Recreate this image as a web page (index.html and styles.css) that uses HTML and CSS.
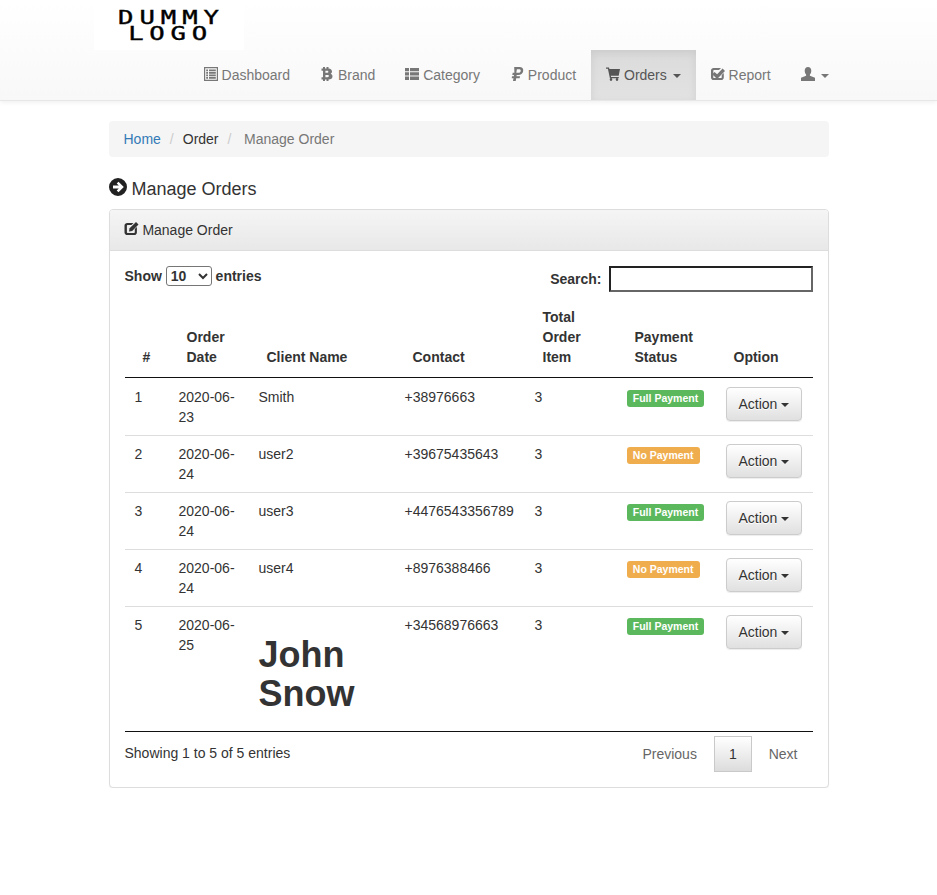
FILE: index.html
```html
<!DOCTYPE html>
<html lang="en">
<head>
<meta charset="utf-8">
<title>Manage Orders</title>
<link rel="stylesheet" href="styles.css">
</head>
<body>
<svg class="defs" width="0" height="0" aria-hidden="true">
  <symbol id="i-list" viewBox="0 0 14 14"><path fill-rule="evenodd" d="M0 0h14v14H0zM1.200 1.200v11.600h11.600V1.200zM2.200 2.400h1.800v1.800H2.200zM5 2.400h6.800v1.800H5zM2.200 5h1.800v1.800H2.200zM5 5h6.800v1.800H5zM2.200 7.500h1.800v1.800H2.200zM5 7.500h6.800v1.800H5zM2.200 10h1.800v1.800H2.200zM5 10h6.800v1.800H5z"/></symbol>
  <symbol id="i-btc" viewBox="0 0 14 14"><path fill-rule="evenodd" d="M3 0h2v1.500h1.500V0h2v1.600C10.800 1.900 12 3 12 4.600c0 1-.5 1.800-1.300 2.200 1.100.4 1.800 1.300 1.800 2.600 0 1.800-1.500 2.900-4 3V14h-2v-1.600H5V14H3v-1.600H1.500v-2.200H3V3.700H1.500V1.500H3zM5.400 3.700v2.100h1.700c.8 0 1.300-.4 1.300-1s-.5-1.100-1.300-1.100zM5.400 7.900v2.300h2c1 0 1.500-.4 1.500-1.200S8.400 7.900 7.400 7.900z"/></symbol>
  <symbol id="i-th" viewBox="0 0 14 14"><path d="M0 1h4v3.300H0zM5 1h9v3.300H5zM0 5.300h4v3.300H0zM5 5.300h9v3.300H5zM0 9.600h4V13H0zM5 9.600h9V13H5z"/></symbol>
  <symbol id="i-rub" viewBox="0 0 14 14"><path fill-rule="evenodd" d="M4.200 0h5.300C12 0 13.600 1.500 13.200 3.900S10.800 8 8.300 8H6.700l-.2 1.300H10l-.3 1.900H6.200L5.700 14H3l.5-2.800H1.700L2 9.300h1.800L4 8H2.300l.4-2.300h1.700zM6.900 2.200l-.6 3.500h2.300c1.200 0 1.900-.7 2.100-1.800s-.4-1.700-1.500-1.700z"/></symbol>
  <symbol id="i-cart" viewBox="0 0 14 14"><path d="M0 .4h3l.4 1.600H14l-1.300 6.800H4.800l.3 1.200h7.700v1.300H3.900L1.900 1.700H0zM5 11.300a1.300 1.300 0 1 1 0 2.600 1.300 1.300 0 0 1 0-2.600zM11 11.300a1.300 1.300 0 1 1 0 2.600 1.300 1.300 0 0 1 0-2.600z"/></symbol>
  <symbol id="i-check" viewBox="0 0 14 14"><path d="M2.600 1H10L8 3H3c-.4 0-.7.300-.7.700v6.700c0 .4.300.7.700.7h7c.4 0 .7-.3.700-.7V8l2.100-2v4.400c0 1.500-1.100 2.600-2.600 2.600H2.600C1.100 13 0 11.900 0 10.400V3.600C0 2.100 1.100 1 2.600 1z"/><path d="M3.600 4.900l2.500 2.400L11.600 1.600 14 4 6.100 11.900 1.200 7.300z"/></symbol>
  <symbol id="i-user" viewBox="0 0 14 14"><path d="M7 0c2 0 3.300 1.500 3.300 3.700 0 1.500-.6 3-1.400 3.800v1.200l5.100 2.100V14H0v-3.200l5.100-2.100V7.500C4.300 6.700 3.700 5.200 3.700 3.700 3.700 1.500 5 0 7 0z"/></symbol>
  <symbol id="i-arrow" viewBox="0 0 18 18"><path fill-rule="evenodd" d="M9 0a9 9 0 1 1 0 18A9 9 0 0 1 9 0zM9.500 3.700L7.700 5.500l2.100 2H4v3h5.800l-2.100 2 1.800 1.800L14.800 9z"/></symbol>
  <symbol id="i-edit" viewBox="0 0 14 14"><path d="M2.800 1H9L7 3H3.100c-.4 0-.7.300-.7.700v6.500c0 .4.300.7.700.7h6.500c.4 0 .7-.3.700-.7V7l2.100-2.100v5.500c0 1.500-1.100 2.600-2.600 2.600H2.800C1.200 13 0 11.900 0 10.400V3.600C0 2.100 1.200 1 2.800 1z"/><path d="M11.500 0L14 2.500 7.700 8.900 4.500 9.500l.6-3.200z"/></symbol>
</svg>

<header class="navbar">
  <div class="container">
    <div class="brand"><span class="logo-text"><span class="logo-line">DUMMY</span><span class="logo-line logo-second">LOGO</span></span></div>
    <nav class="nav">
      <a class="nav-item"><svg class="icon"><use href="#i-list"/></svg> Dashboard</a>
      <a class="nav-item"><svg class="icon"><use href="#i-btc"/></svg> Brand</a>
      <a class="nav-item"><svg class="icon"><use href="#i-th"/></svg> Category</a>
      <a class="nav-item"><svg class="icon"><use href="#i-rub"/></svg> Product</a>
      <a class="nav-item active"><svg class="icon"><use href="#i-cart"/></svg> Orders <span class="caret"></span></a>
      <a class="nav-item"><svg class="icon"><use href="#i-check"/></svg> Report</a>
      <a class="nav-item"><svg class="icon"><use href="#i-user"/></svg> <span class="caret"></span></a>
    </nav>
  </div>
</header>

<main class="page">
  <ol class="breadcrumb">
    <li><a class="link">Home</a></li>
    <li>Order</li>
    <li class="current">Manage Order</li>
  </ol>

  <h4 class="page-title"><svg class="title-icon"><use href="#i-arrow"/></svg> Manage Orders</h4>

  <section class="panel">
    <div class="panel-heading"><svg class="icon heading-icon"><use href="#i-edit"/></svg> Manage Order</div>
    <div class="panel-body">
      <div class="controls">
        <label class="length">Show
          <select class="length-select"><option>10</option><option>25</option><option>50</option></select>
          entries</label>
        <label class="search">Search:<input class="search-input" type="search"></label>
      </div>

      <table class="orders">
        <colgroup>
          <col class="c-num"><col class="c-date"><col class="c-client"><col class="c-contact"><col class="c-total"><col class="c-pay"><col class="c-opt">
        </colgroup>
        <thead>
          <tr><th>#</th><th>Order Date</th><th>Client Name</th><th>Contact</th><th>Total Order Item</th><th>Payment Status</th><th>Option</th></tr>
        </thead>
        <tbody>
          <tr><td>1</td><td>2020-06-23</td><td>Smith</td><td>+38976663</td><td>3</td><td><span class="label label-ok">Full Payment</span></td><td><button class="btn">Action <span class="caret btn-caret"></span></button></td></tr>
          <tr><td>2</td><td>2020-06-24</td><td>user2</td><td>+39675435643</td><td>3</td><td><span class="label label-warn">No Payment</span></td><td><button class="btn">Action <span class="caret btn-caret"></span></button></td></tr>
          <tr><td>3</td><td>2020-06-24</td><td>user3</td><td>+4476543356789</td><td>3</td><td><span class="label label-ok">Full Payment</span></td><td><button class="btn">Action <span class="caret btn-caret"></span></button></td></tr>
          <tr><td>4</td><td>2020-06-24</td><td>user4</td><td>+8976388466</td><td>3</td><td><span class="label label-warn">No Payment</span></td><td><button class="btn">Action <span class="caret btn-caret"></span></button></td></tr>
          <tr><td>5</td><td>2020-06-25</td><td><h1 class="client-big">John Snow</h1></td><td>+34568976663</td><td>3</td><td><span class="label label-ok">Full Payment</span></td><td><button class="btn">Action <span class="caret btn-caret"></span></button></td></tr>
        </tbody>
      </table>

      <div class="table-foot">
        <div class="info">Showing 1 to 5 of 5 entries</div>
        <div class="pager">
          <a class="page-btn">Previous</a>
          <a class="page-btn current-page">1</a>
          <a class="page-btn">Next</a>
        </div>
      </div>
    </div>
  </section>
</main>
</body>
</html>
```
FILE: styles.css
```css
* { box-sizing: border-box; }
html, body { margin: 0; padding: 0; }
body {
  font-family: "Liberation Sans", Arial, sans-serif;
  font-size: 14px;
  line-height: 20px;
  color: #333;
  background: #fff;
}
.defs { position: absolute; }
.icon { width: 14px; height: 14px; fill: currentColor; vertical-align: -1px; }

.navbar {
  height: 101px;
  background: linear-gradient(to bottom, #fff 0%, #f8f8f8 100%);
  border-bottom: 1px solid #e7e7e7;
  box-shadow: inset 0 1px 0 rgba(255,255,255,.15), 0 1px 5px rgba(0,0,0,.075);
}
.container { width: 750px; margin: 0 auto; }
.brand {
  width: 150px;
  height: 50px;
  background: #fff;
  display: flex;
  justify-content: flex-start;
  padding: 9px 0 0 24px;
}
.logo-text {
  display: block;
  width: 78px;
  transform: scaleX(1.35);
  transform-origin: left top;
  font-family: "DejaVu Sans Mono", monospace;
  font-weight: 400;
  font-size: 19px;
  line-height: 16px;
  color: #000;
  white-space: nowrap;
  -webkit-text-stroke: 0.4px #000;
}
.logo-line { display: block; letter-spacing: 4.400px; }
.logo-second { margin-left: 7.500px; letter-spacing: 4.300px; }
.nav { display: flex; justify-content: flex-end; height: 50px; }
.nav-item { display: block; padding: 15px; color: #777; white-space: nowrap; }
.nav-item.active {
  color: #555;
  background: linear-gradient(to bottom, #dbdbdb 0%, #e2e2e2 100%);
  box-shadow: inset 0 3px 9px rgba(0,0,0,.075);
}
.caret {
  display: inline-block;
  width: 0; height: 0;
  margin-left: 2px;
  vertical-align: middle;
  border-top: 4px solid currentColor;
  border-left: 4px solid transparent;
  border-right: 4px solid transparent;
}
.btn-caret { margin-left: 0; }

.page { width: 720px; margin: 20px auto 0; }
.breadcrumb {
  list-style: none;
  display: flex;
  height: 36px;
  margin: 0 0 20px;
  padding: 8px 15px;
  background: #f5f5f5;
  border-radius: 4px;
}
.breadcrumb li + li::before { content: "/"; color: #ccc; padding: 0 9px 0 9px; }
.breadcrumb .current { color: #777; }
.breadcrumb .current::before { padding-right: 12.600px; }
.link { color: #337ab7; }

.page-title {
  margin: 0 0 10px;
  padding-top: 1px;
  font-size: 18px;
  font-weight: 400;
  line-height: 20px;
  color: #333;
  height: 22px;
}
.title-icon { width: 18px; height: 18px; fill: #222; vertical-align: -1px; }

.panel {
  border: 1px solid #ddd;
  border-radius: 4px;
  box-shadow: 0 1px 1px rgba(0,0,0,.05);
  background: #fff;
}
.panel-heading {
  height: 41px;
  padding: 10px 15px;
  background: linear-gradient(to bottom, #f5f5f5 0%, #e8e8e8 100%);
  border-bottom: 1px solid #ddd;
  border-radius: 3px 3px 0 0;
}
.heading-icon { margin-left: -1px; width: 15px; }
.panel-body { padding: 15px; }

.controls { display: flex; justify-content: space-between; height: 31px; font-weight: 700; }
.length-select {
  font-family: inherit;
  font-size: 14px;
  font-weight: 700;
  width: 46px;
  height: 20px;
  margin: 0;
  background: #fff;
  color: #333;
  border: 1px solid #767676;
  border-radius: 3px;
  padding: 0;
}
.search { display: flex; align-items: center; height: 26px; }
.search-input {
  width: 204px;
  height: 26px;
  margin-left: 7px;
  border-width: 2px;
  border-style: solid;
  border-color: #222 #666 #666 #222;
  border-radius: 0;
  outline: none;
  background: #fff;
}

.orders { width: 688px; table-layout: fixed; border-collapse: collapse; }
.c-num { width: 44px; }
.c-date { width: 80px; }
.c-client { width: 146px; }
.c-contact { width: 130px; }
.c-total { width: 92px; }
.c-pay { width: 99px; }
.c-opt { width: 97px; }
.orders th {
  padding: 10px 18px;
  text-align: left;
  vertical-align: bottom;
  font-weight: 700;
  border-bottom: 1px solid #111;
}
.orders td { padding: 8px 10px; vertical-align: top; border-top: 1px solid #ddd; }
.orders tbody tr:first-child td { border-top: 0; padding-top: 9px; }
.orders tbody tr:last-child td { padding-bottom: 7px; }
.client-big { margin: 20px 0 11.200px; font-size: 36px; line-height: 39px; font-weight: 700; color: #333; }

.label {
  display: inline-block;
  font-size: 10.5px;
  font-weight: 700;
  line-height: 1;
  color: #fff;
  padding: 3px 6.300px;
  border-radius: 3px;
  white-space: nowrap;
  vertical-align: top;
  margin-top: 3px;
}
.label-ok { background: #5cb85c; }
.label-warn { background: #f0ad4e; }

.btn {
  display: block;
  width: 76px;
  height: 34px;
  padding: 6px 12px;
  font-family: inherit;
  font-size: 14px;
  line-height: 20px;
  color: #333;
  text-align: left;
  background: linear-gradient(to bottom, #fff 0%, #e0e0e0 100%);
  border: 1px solid #ccc;
  border-radius: 4px;
  box-shadow: inset 0 1px 0 rgba(255,255,255,.15), 0 1px 1px rgba(0,0,0,.075);
  text-shadow: 0 1px 0 #fff;
  white-space: nowrap;
}

.table-foot {
  display: flex;
  justify-content: space-between;
  border-top: 1px solid #111;
  padding-top: 4px;
}
.info { padding-top: 7px; }
.pager { display: flex; height: 36px; margin-right: -1px; }
.page-btn { padding: 7px 15px 0; color: #666; border: 1px solid transparent; height: 36px; }
.page-btn + .page-btn { margin-left: 1px; }
.current-page {
  color: #333;
  background: linear-gradient(to bottom, #fff 0%, #dcdcdc 100%);
  border-color: #c9c9c9;
  padding-left: 14px; padding-right: 14px;
}
```
